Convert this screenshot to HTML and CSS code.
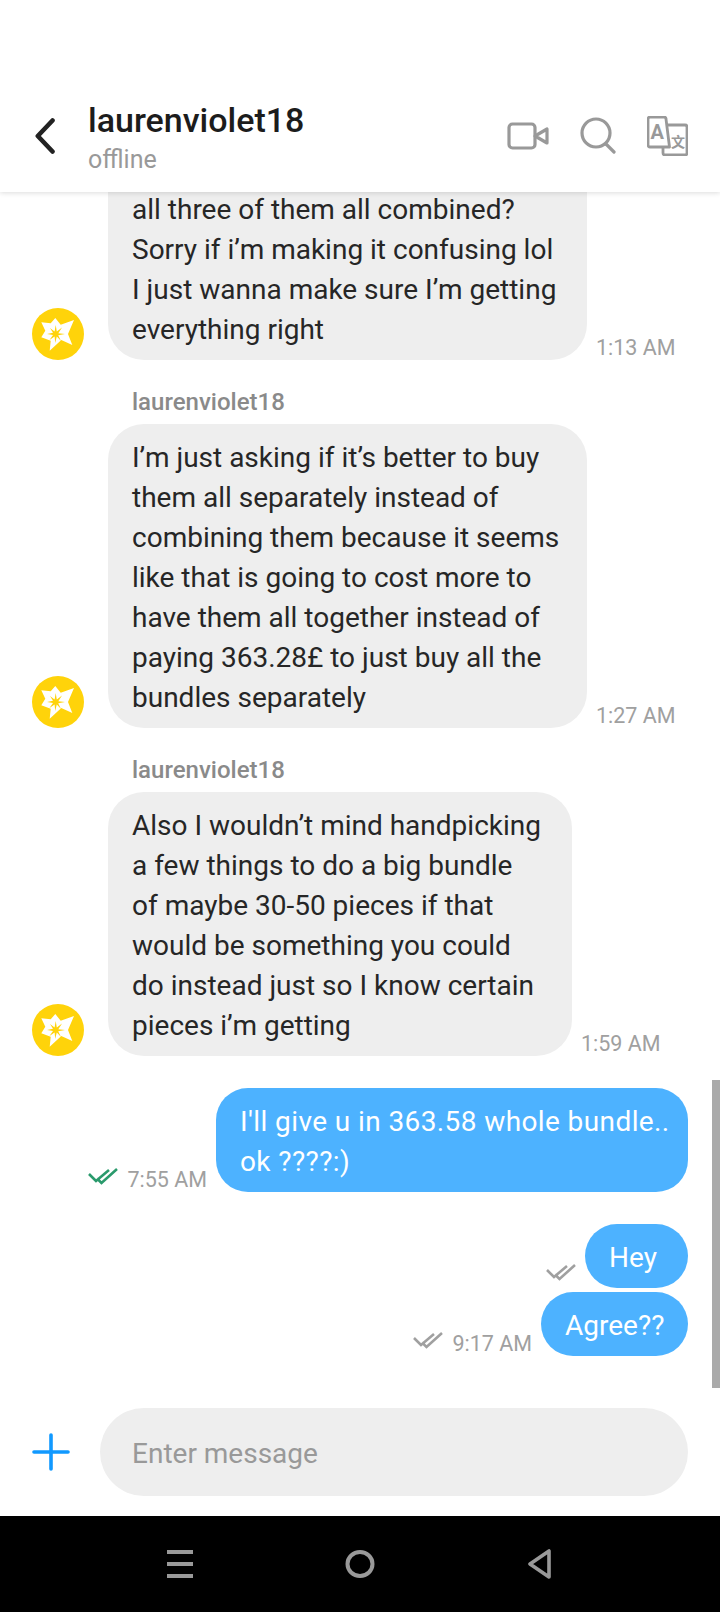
FILE: index.html
```html
<!DOCTYPE html>
<html lang="en">
<head>
    <meta charset="UTF-8">
    <meta name="viewport" content="width=device-width, initial-scale=1.0">
    <title>laurenviolet18</title>
    <link rel="stylesheet" href="styles.css">
</head>
<body>
    <svg class="defs">
        <symbol id="avatar-star" viewBox="0 0 52 52">
            <circle cx="26" cy="26" r="26" fill="#ffd30a"></circle>
            <polygon fill="#fff" points="9.3,14.3 18.7,15.3 23.3,10 28.7,16.7 42,12 36,26 40.3,37 29.3,32 17.7,42.7 18.7,32.7 9.3,29.3 13.3,22.7"></polygon>
            <polygon fill="#ffd30a" points="23.7,17 24.8,23.6 30,19.5 26.3,25.2 33,26 26.2,27.2 29,33 24.8,28.6 23.2,35 22.6,28.6 17.5,32 21,27 15,26 21,24.8 18,20 22.6,23.6"></polygon>
        </symbol>
        <symbol id="ticks" viewBox="0 0 30 18">
            <path d="M1 7L8 14L21 3M9 11.5L13.5 16L29 2" fill="none" stroke="currentColor" stroke-width="2.6"></path>
        </symbol>
    </svg>

    <div class="app">
        <header class="top-bar">
            <svg class="back-icon" width="20" height="36" viewBox="0 0 20 36" fill="none" stroke="#222" stroke-width="4.6" stroke-linecap="round" stroke-linejoin="round">
                <polyline points="17.5,2.5 2.8,18 17.5,33.5"></polyline>
            </svg>
            <div class="contact">
                <h1>laurenviolet18</h1>
                <div class="status">offline</div>
            </div>
            <div class="top-actions">
                <svg width="42" height="28" viewBox="0 0 42 28" fill="none" stroke="#999" stroke-width="3.2" stroke-linejoin="round">
                    <rect x="2" y="2" width="26" height="24" rx="3.5"></rect>
                    <polygon points="28,14 40,7 40,21"></polygon>
                </svg>
                <svg width="36" height="38" viewBox="0 0 36 38" fill="none" stroke="#999" stroke-width="3.2" stroke-linecap="round">
                    <circle cx="16" cy="16" r="14"></circle>
                    <line x1="26" y1="27" x2="34" y2="35"></line>
                </svg>
                <svg width="41" height="40" viewBox="0 0 41 40" fill="none" stroke="#999" stroke-width="2.8" stroke-linejoin="round">
                    <path d="M16 31H3a2 2 0 0 1-2-2V3a2 2 0 0 1 2-2h14a2 2 0 0 1 2 2l3.5 28z"></path>
                    <path d="M20 9h18a2 2 0 0 1 2 2v26a2 2 0 0 1-2 2H18a2 2 0 0 1-2-2v-6"></path>
                    <text x="3.5" y="23" class="translate-a">A</text>
                    <text x="24" y="31" class="translate-b">文</text>
                </svg>
            </div>
        </header>

        <main class="messages">
            <div class="row">
                <svg class="avatar"><use href="#avatar-star"></use></svg>
                <div class="bubble bubble-cut bubble-lg">all three of them all combined?<br>Sorry if i’m making it confusing lol<br>I just wanna make sure I’m getting<br>everything right</div>
                <span class="time">1:13 AM</span>
            </div>

            <div class="sender">laurenviolet18</div>
            <div class="row">
                <svg class="avatar"><use href="#avatar-star"></use></svg>
                <div class="bubble bubble-lg">I’m just asking if it’s better to buy<br>them all separately instead of<br>combining them because it seems<br>like that is going to cost more to<br>have them all together instead of<br>paying 363.28£ to just buy all the<br>bundles separately</div>
                <span class="time">1:27 AM</span>
            </div>

            <div class="sender">laurenviolet18</div>
            <div class="row">
                <svg class="avatar"><use href="#avatar-star"></use></svg>
                <div class="bubble bubble-md">Also I wouldn’t mind handpicking<br>a few things to do a big bundle<br>of maybe 30-50 pieces if that<br>would be something you could<br>do instead just so I know certain<br>pieces i’m getting</div>
                <span class="time">1:59 AM</span>
            </div>

            <div class="row row-out row-first">
                <svg class="tick tick-read"><use href="#ticks"></use></svg>
                <span class="time">7:55 AM</span>
                <div class="bubble bubble-out bubble-wide">I'll give u in 363.58 whole bundle..<br>ok ????:)</div>
            </div>

            <div class="row row-out row-first">
                <svg class="tick"><use href="#ticks"></use></svg>
                <div class="bubble bubble-out bubble-hey">Hey</div>
            </div>
            <div class="row row-out row-next">
                <svg class="tick"><use href="#ticks"></use></svg>
                <span class="time">9:17 AM</span>
                <div class="bubble bubble-out bubble-agree">Agree??</div>
            </div>

            <div class="scroll-thumb"></div>
        </main>

        <footer class="composer">
            <svg width="38" height="38" viewBox="0 0 38 38" stroke="#1199ff" stroke-width="3.6" stroke-linecap="round">
                <line x1="2" y1="19" x2="36" y2="19"></line>
                <line x1="19" y1="2" x2="19" y2="36"></line>
            </svg>
            <input class="message-input" type="text" placeholder="Enter message">
        </footer>

        <nav class="nav-bar">
            <svg width="26" height="28" viewBox="0 0 26 28" fill="#999">
                <rect width="26" height="4"></rect>
                <rect y="12" width="26" height="4"></rect>
                <rect y="24" width="26" height="4"></rect>
            </svg>
            <svg width="30" height="28" viewBox="0 0 30 28" fill="none" stroke="#999" stroke-width="4">
                <ellipse cx="15" cy="14" rx="12.5" ry="12"></ellipse>
            </svg>
            <svg width="24" height="30" viewBox="0 0 24 30" fill="none" stroke="#999" stroke-width="3.6" stroke-linejoin="round">
                <polygon points="22,2 22,28 3,15"></polygon>
            </svg>
        </nav>
    </div>
</body>
</html>
```

FILE: styles.css
```css
:root {
    --bubble-gray: #eeeeee;
    --bubble-blue: #4db2ff;
    --text-dark: #262626;
    --text-gray: #999999;
}

* {
    margin: 0;
    padding: 0;
    box-sizing: border-box;
}

body {
    font-family: Roboto, sans-serif;
    background: #fff;
    color: var(--text-dark);
}

.defs {
    display: none;
}

.app {
    width: 720px;
    height: 1612px;
    display: flex;
    flex-direction: column;
    overflow: hidden;
}

.top-bar {
    height: 192px;
    flex-shrink: 0;
    padding: 92px 32px 0 35px;
    display: flex;
    align-items: flex-start;
    background: #fff;
    box-shadow: 0 1px 5px rgba(0,0,0,0.14);
    position: relative;
    z-index: 2;
}

.back-icon {
    margin-top: 26px;
}

.contact {
    margin-left: 33px;
    flex: 1;
}

.contact h1 {
    margin-top: 8px;
    font-size: 34px;
    line-height: 40px;
    font-weight: 500;
    color: #1c1c1c;
}

.status {
    margin-top: 5px;
    font-size: 25px;
    line-height: 30px;
    color: var(--text-gray);
}

.top-actions {
    height: 40px;
    margin-top: 24px;
    display: flex;
    align-items: center;
    gap: 31px;
}

.translate-a {
    font-family: Roboto, sans-serif;
    font-size: 20px;
    font-weight: 700;
    fill: #999;
    stroke: none;
}

.translate-b {
    font-family: "Noto Sans CJK SC", sans-serif;
    font-size: 14px;
    font-weight: 700;
    fill: #999;
    stroke: none;
}

.messages {
    flex: 1;
    min-height: 0;
    padding: 0 32px 32px;
    display: flex;
    flex-direction: column;
    justify-content: flex-end;
    position: relative;
    overflow: hidden;
}

.row {
    display: flex;
    align-items: flex-end;
    flex-shrink: 0;
}

.row-out {
    justify-content: flex-end;
}

.row-first {
    margin-top: 32px;
}

.row-next {
    margin-top: 4px;
}

.avatar {
    width: 52px;
    height: 52px;
    margin-right: 24px;
    flex-shrink: 0;
}

.bubble {
    padding: 14px 24px 10px;
    background: var(--bubble-gray);
    border-radius: 36px;
    font-size: 28px;
    line-height: 40px;
    white-space: nowrap;
}

.bubble-cut {
    padding-top: 54px;
}

.bubble-lg {
    width: 479px;
}

.bubble-md {
    width: 464px;
}

.bubble-out {
    background: var(--bubble-blue);
    color: #fff;
    border-radius: 32px;
}

.bubble-wide {
    width: 472px;
    letter-spacing: 0.4px;
}

.bubble-hey {
    width: 103px;
}

.bubble-agree {
    width: 147px;
}

.sender {
    margin: 28px 0 8px 100px;
    font-size: 24px;
    line-height: 28px;
    font-weight: 500;
    color: #8a8a8a;
    flex-shrink: 0;
}

.time {
    margin: 0 9px -1px 9px;
    font-size: 21.5px;
    line-height: 26px;
    color: #a0a0a0;
}

.tick {
    width: 30px;
    height: 18px;
    margin: 0 9px 7px 0;
    color: #a0a0a0;
}

.tick-read {
    color: #2a9a6c;
}

.row-out .time {
    margin-left: 0;
}

.scroll-thumb {
    position: absolute;
    right: 0;
    bottom: 0;
    width: 8px;
    height: 308px;
    background: #aaaaaa;
}

.composer {
    flex-shrink: 0;
    padding: 20px 32px;
    display: flex;
    align-items: center;
    gap: 30px;
}

.message-input {
    flex: 1;
    height: 88px;
    padding: 3px 32px 0;
    border: none;
    border-radius: 44px;
    background: var(--bubble-gray);
    font-family: inherit;
    font-size: 28px;
    outline: none;
}

.message-input::placeholder {
    color: var(--text-gray);
}

.nav-bar {
    height: 96px;
    flex-shrink: 0;
    padding-right: 3px;
    background: #000;
    display: flex;
    align-items: center;
    justify-content: center;
    gap: 152px;
}
```
